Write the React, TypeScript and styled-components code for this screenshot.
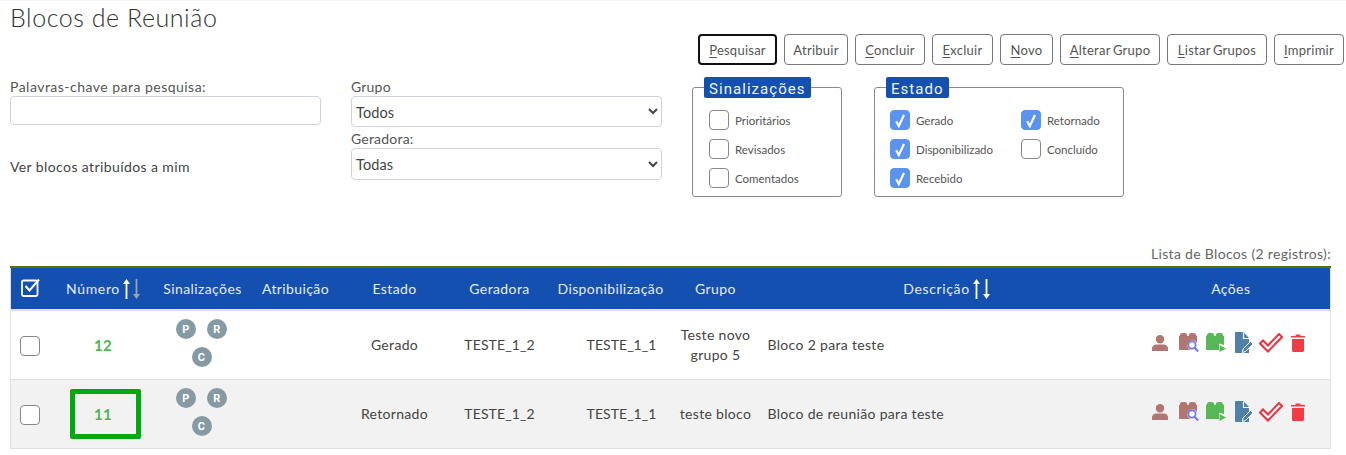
import React from 'react';
import styled, { createGlobalStyle } from 'styled-components';

const Global = createGlobalStyle`
  html, body { margin: 0; padding: 0; background: #fff; }
  body { font-family: Lato, "Open Sans", sans-serif; color: #444; }
`;

const Page = styled.div`
  width: 1346px;
  height: 455px;
  box-sizing: border-box;
  border-top: 1px solid #f6f6f6;
  padding: 0 2px 0 10px;
  overflow: hidden;
`;

const Title = styled.h1`
  margin: 0;
  height: 33px;
  font-size: 25px;
  line-height: 32px;
  font-weight: 300;
  color: #333;
  letter-spacing: 0.55px;
`;

const Toolbar = styled.div`
  display: flex;
  justify-content: flex-end;
  gap: 7px;
  height: 31px;
`;

const ToolButton = styled.button<{ $w: number; $focus?: boolean }>`
  width: ${(p) => p.$w}px;
  height: 31px;
  padding: 0;
  box-sizing: border-box;
  background: #fff;
  border: ${(p) => (p.$focus ? '2px solid #111' : '1px solid #777')};
  border-radius: 4px;
  font: 400 13px Lato, sans-serif;
  letter-spacing: 0.25px;
  word-spacing: -1px;
  color: #555;
  u { text-underline-offset: 2px; }
`;

const Filters = styled.div`
  display: flex;
  margin-top: 12px;
  height: 161px;
  align-items: flex-start;
`;

const Column = styled.div`
  width: 311px;
  margin-right: 30px;
`;

const FieldLabel = styled.label<{ $ls?: number }>`
  display: block;
  height: 18px;
  padding-top: 1px;
  box-sizing: content-box;
  margin-bottom: 0;
  font-size: 14px;
  line-height: 17px;
  letter-spacing: ${(p) => p.$ls ?? 0.2}px;
  color: #555;
`;

const TextInput = styled.input`
  display: block;
  width: 100%;
  height: 29px;
  box-sizing: border-box;
  border: 1px solid #ced4da;
  border-radius: 4px;
`;

const Select = styled.select<{ $h: number; $pt: number }>`
  display: block;
  width: 100%;
  height: ${(p) => p.$h}px;
  box-sizing: border-box;
  padding: ${(p) => p.$pt}px 0 0;
  border: 1px solid #ced4da;
  border-radius: 4px;
  background: #fff;
  font: 400 14.5px Lato, sans-serif;
  letter-spacing: 0.1px;
  color: #444;
`;

const MineLabel = styled.div`
  margin-top: 33px;
  font-size: 14px;
  line-height: 18px;
  letter-spacing: 0.4px;
  color: #444;
`;

const Spaced = styled.div`
  margin-top: 2px;
`;

const Group = styled.fieldset<{ $w: number; $mr: number }>`
  width: ${(p) => p.$w}px;
  height: 120px;
  box-sizing: border-box;
  margin: 0 ${(p) => p.$mr}px 0 0;
  padding: 12px 0 0 0;
  border: 1px solid #8a8a8a;
  border-radius: 3px;
  min-width: 0;
`;

const GroupTitle = styled.legend`
  margin-left: 11px;
  padding: 0 5px;
  height: 21px;
  box-sizing: border-box;
  background: #1450b0;
  border-radius: 2px;
  color: #f2f5fb;
  font: 400 15px/24px Roboto, sans-serif;
  letter-spacing: 1.05px;
`;

const CheckGrid = styled.div<{ $cols: number; $pl: number }>`
  display: grid;
  grid-template-columns: repeat(${(p) => p.$cols}, 131px);
  grid-auto-rows: 20px;
  row-gap: 9px;
  padding-left: ${(p) => p.$pl}px;
`;

const CheckRow = styled.div`
  display: flex;
  align-items: center;
  gap: 6px;
  font-size: 11.5px;
  letter-spacing: 0;
  color: #555;
`;

const Box = styled.span<{ $on?: boolean }>`
  display: inline-flex;
  align-items: center;
  justify-content: center;
  flex: none;
  width: 20px;
  height: 20px;
  box-sizing: border-box;
  border-radius: 4px;
  border: ${(p) => (p.$on ? '1px solid #5b93ee' : '1px solid #888')};
  background: ${(p) => (p.$on ? '#5b93ee' : '#fff')};
`;

const Caption = styled.div`
  width: 1321px;
  margin-top: 6px;
  height: 20px;
  text-align: right;
  font-size: 14px;
  line-height: 20px;
  letter-spacing: 0.32px;
  color: #666;
`;

const Table = styled.table`
  width: 1321px;
  margin-top: 2px;
  table-layout: fixed;
  border-collapse: collapse;
  border-top: 2px solid #5c6f10;
  border-left: 1px solid #e2e2e2;
  border-right: 1px solid #e2e2e2;
`;

const HeadCell = styled.th`
  height: 41px;
  padding: 0;
  background: #1450b0;
  border-bottom: 2px solid #dee2e6;
  font-weight: 400;
  font-size: 14px;
  letter-spacing: 0.4px;
  color: #e6ecf7;
  text-align: center;
  vertical-align: middle;
  white-space: nowrap;
`;

const HeadInner = styled.span`
  display: inline-flex;
  align-items: center;
  gap: 3px;
  letter-spacing: 0.65px;
`;

const Row = styled.tr<{ $alt?: boolean }>`
  background: ${(p) => (p.$alt ? '#f2f2f2' : '#fff')};
`;

const Cell = styled.td<{ $left?: boolean; $pl?: number; $ls?: number }>`
  height: 68px;
  padding: 0 0 0 ${(p) => p.$pl ?? 0}px;
  border-bottom: 1px solid #dfdfdf;
  font-size: 14px;
  line-height: 20px;
  letter-spacing: ${(p) => p.$ls ?? 0.32}px;
  color: #444;
  text-align: ${(p) => (p.$left ? 'left' : 'center')};
  vertical-align: middle;
  position: relative;
`;

const RowBox = styled(Box)`
  margin-right: 2px;
  vertical-align: middle;
`;

const NumberText = styled.span`
  color: #4fb54f;
  font-weight: 700;
  font-size: 15px;
`;

const Highlight = styled.div`
  position: absolute;
  left: 19px;
  top: 9px;
  width: 71px;
  height: 50px;
  box-sizing: border-box;
  border: 5px solid #00a90f;
  border-radius: 2px;
`;

const Badges = styled.div`
  display: flex;
  flex-wrap: wrap;
  justify-content: center;
  gap: 8px 11px;
  width: 60px;
  margin: -4px auto 0;
  transform: translateX(-1px);
`;

const Badge = styled.span`
  display: inline-flex;
  width: 20px;
  height: 20px;
  align-items: center;
  justify-content: center;
  border-radius: 50%;
  background: #869aa3;
  color: #fff;
  font: 700 11px Roboto, sans-serif;
`;

const Actions = styled.div`
  display: flex;
  align-items: center;
  height: 22px;
  margin: -5px 0 0 20px;
`;

const Icon = styled.svg<{ $gap: number }>`
  flex: none;
  margin-left: ${(p) => p.$gap}px;
`;

const Check = () => (
  <svg width="16" height="16" viewBox="0 0 16 16">
    <path d="M4.2 9.3 L6.8 14 L12 3" fill="none" stroke="#fff" strokeWidth="2.2" />
  </svg>
);

const Arrow = ({ dir, color }: { dir: 'up' | 'down'; color: string }) => (
  <svg width="7" height="20" viewBox="0 0 7 20">
    {dir === 'up' ? (
      <path d="M3.5 0 L7 5 H4.4 V20 H2.6 V5 H0 Z" fill={color} />
    ) : (
      <path d="M3.5 20 L7 15 H4.4 V0 H2.6 V15 H0 Z" fill={color} />
    )}
  </svg>
);

const brick = 'M0 2.8 H1 V2 Q1 0 3.5 0 H6 Q8 0 8 2 V2.8 H10 V2 Q10 0 12 0 H14.5 Q17 0 17 2 V2.8 H18';

const ActionIcons = () => (
  <Actions>
    <Icon $gap={0} width="16" height="16" viewBox="0 0 16 16">
      <circle cx="8" cy="4.2" r="4.2" fill="#b17672" />
      <path d="M0 16 V13.5 C0 10.8 2.5 9.5 4.5 9.5 H11.5 C13.5 9.5 16 10.8 16 13.5 V16 Z" fill="#b17672" />
    </Icon>
    <Icon $gap={11} width="20" height="19" viewBox="0 0 20 19">
      <path d={`${brick} V17 H0 Z`} fill="#b17672" />
      <circle cx="13.5" cy="12.5" r="5" fill="#fff" />
      <circle cx="13" cy="12" r="3.6" fill="none" stroke="#6f7cf0" strokeWidth="1.8" />
      <path d="M15.5 14.8 L19.2 18.5" stroke="#6f7cf0" strokeWidth="2" />
    </Icon>
    <Icon $gap={7} width="20" height="19" viewBox="0 0 20 19">
      <path d={`${brick} V12 L13 10.5 V17 H0 Z`} fill="#56b856" />
      <path d="M13.5 12 L20 15.5 L13.5 19 Z" fill="#56b856" />
    </Icon>
    <Icon $gap={9} width="18" height="21" viewBox="0 0 18 21">
      <path d="M1 0 H8.5 L14 6 V21 H1 C0.3 21 0 20.5 0 20 V1 C0 .4 .4 0 1 0 Z" fill="#4f81a8" />
      <path d="M8.5 0.5 V6.5 H14" fill="none" stroke="#fff" strokeWidth="1.2" />
      <path d="M7.5 20.5 L8 17 L15.5 9.5 L18 12 L10.5 19.5 Z" fill="#4f81a8" stroke="#fff" strokeWidth="1" />
    </Icon>
    <Icon $gap={6} width="24" height="20" viewBox="0 0 24 20">
      <path d="M1 10.5 L4 7.5 L9 12.5 L20 1 L23 4 L9 18.5 Z" fill="#fff" stroke="#ee2f3c" strokeWidth="2" />
    </Icon>
    <Icon $gap={8} width="14" height="18" viewBox="0 0 14 18">
      <path d="M0 2 H4.5 V0.6 H9.5 V2 H14 V3.6 H0 Z M1 5 H13 V16.5 C13 17.4 12.4 18 11.5 18 H2.5 C1.6 18 1 17.4 1 16.5 Z" fill="#f23c45" />
    </Icon>
  </Actions>
);

const tools: [string, string, number, boolean?][] = [
  ['P', 'esquisar', 79, true],
  ['', 'Atribuir', 64],
  ['C', 'oncluir', 70],
  ['E', 'xcluir', 61],
  ['N', 'ovo', 53],
  ['A', 'lterar Grupo', 100],
  ['L', 'istar Grupos', 100],
  ['I', 'mprimir', 70],
];

const widths = [40, 105, 94, 92, 106, 104, 118, 92, 370, 199];

const rows = [
  { n: '12', estado: 'Gerado', grupo: 'Teste novo grupo 5', desc: 'Bloco 2 para teste' },
  { n: '11', estado: 'Retornado', grupo: 'teste bloco', desc: 'Bloco de reunião para teste', mark: true },
];

const CheckItem = ({ label, on }: { label: string; on?: boolean }) => (
  <CheckRow>
    <Box $on={on}>{on && <Check />}</Box>
    {label}
  </CheckRow>
);

export default function App() {
  return (
    <>
      <Global />
      <Page>
        <Title>Blocos de Reunião</Title>
        <Toolbar>
          {tools.map(([k, rest, w, f]) => (
            <ToolButton key={rest} $w={w} $focus={f}>
              {k && <u>{k}</u>}
              {rest}
            </ToolButton>
          ))}
        </Toolbar>
        <Filters>
          <Column>
            <FieldLabel $ls={0.48}>Palavras-chave para pesquisa:</FieldLabel>
            <TextInput />
            <MineLabel>Ver blocos atribuídos a mim</MineLabel>
          </Column>
          <Column>
            <FieldLabel>Grupo</FieldLabel>
            <Select $h={31} $pt={2} defaultValue="Todos">
              <option>Todos</option>
            </Select>
            <Spaced>
              <FieldLabel>Geradora:</FieldLabel>
            </Spaced>
            <Select $h={32} $pt={0} defaultValue="Todas">
              <option>Todas</option>
            </Select>
          </Column>
          <Group $w={150} $mr={32}>
            <GroupTitle>Sinalizações</GroupTitle>
            <CheckGrid $cols={1} $pl={16}>
              <CheckItem label="Prioritários" />
              <CheckItem label="Revisados" />
              <CheckItem label="Comentados" />
            </CheckGrid>
          </Group>
          <Group $w={250} $mr={0}>
            <GroupTitle>Estado</GroupTitle>
            <CheckGrid $cols={2} $pl={15}>
              <CheckItem label="Gerado" on />
              <CheckItem label="Retornado" on />
              <CheckItem label="Disponibilizado" on />
              <CheckItem label="Concluído" />
              <CheckItem label="Recebido" on />
            </CheckGrid>
          </Group>
        </Filters>
        <Caption>Lista de Blocos (2 registros):</Caption>
        <Table>
          <colgroup>
            {widths.map((w, i) => (
              <col key={i} width={w} />
            ))}
          </colgroup>
          <thead>
            <tr>
              <HeadCell>
                <svg width="19" height="19" viewBox="0 0 19 19">
                  <rect x="1" y="2.5" width="15.5" height="15.5" rx="1.5" fill="none" stroke="#fff" strokeWidth="1.8" />
                  <path d="M4.5 8 L8.5 12.5 L18 1.5" fill="none" stroke="#fff" strokeWidth="2" />
                </svg>
              </HeadCell>
              <HeadCell>
                <HeadInner>
                  Número
                  <Arrow dir="up" color="#fff" />
                  <Arrow dir="down" color="#9aa3b5" />
                </HeadInner>
              </HeadCell>
              <HeadCell>Sinalizações</HeadCell>
              <HeadCell>Atribuição</HeadCell>
              <HeadCell>Estado</HeadCell>
              <HeadCell>Geradora</HeadCell>
              <HeadCell>Disponibilização</HeadCell>
              <HeadCell>Grupo</HeadCell>
              <HeadCell>
                <HeadInner>
                  Descrição
                  <Arrow dir="up" color="#fff" />
                  <Arrow dir="down" color="#fff" />
                </HeadInner>
              </HeadCell>
              <HeadCell>Ações</HeadCell>
            </tr>
          </thead>
          <tbody>
            {rows.map((r, i) => (
              <Row key={r.n} $alt={i === 1}>
                <Cell>
                  <RowBox />
                </Cell>
                <Cell>
                  <NumberText>{r.n}</NumberText>
                  {r.mark && <Highlight />}
                </Cell>
                <Cell>
                  <Badges>
                    <Badge>P</Badge>
                    <Badge>R</Badge>
                    <Badge>C</Badge>
                  </Badges>
                </Cell>
                <Cell />
                <Cell>{r.estado}</Cell>
                <Cell $ls={0.1}>TESTE_1_2</Cell>
                <Cell $pl={22} $ls={0.05}>TESTE_1_1</Cell>
                <Cell>{r.grupo}</Cell>
                <Cell $left $pl={6}>{r.desc}</Cell>
                <Cell>
                  <ActionIcons />
                </Cell>
              </Row>
            ))}
          </tbody>
        </Table>
      </Page>
    </>
  );
}
